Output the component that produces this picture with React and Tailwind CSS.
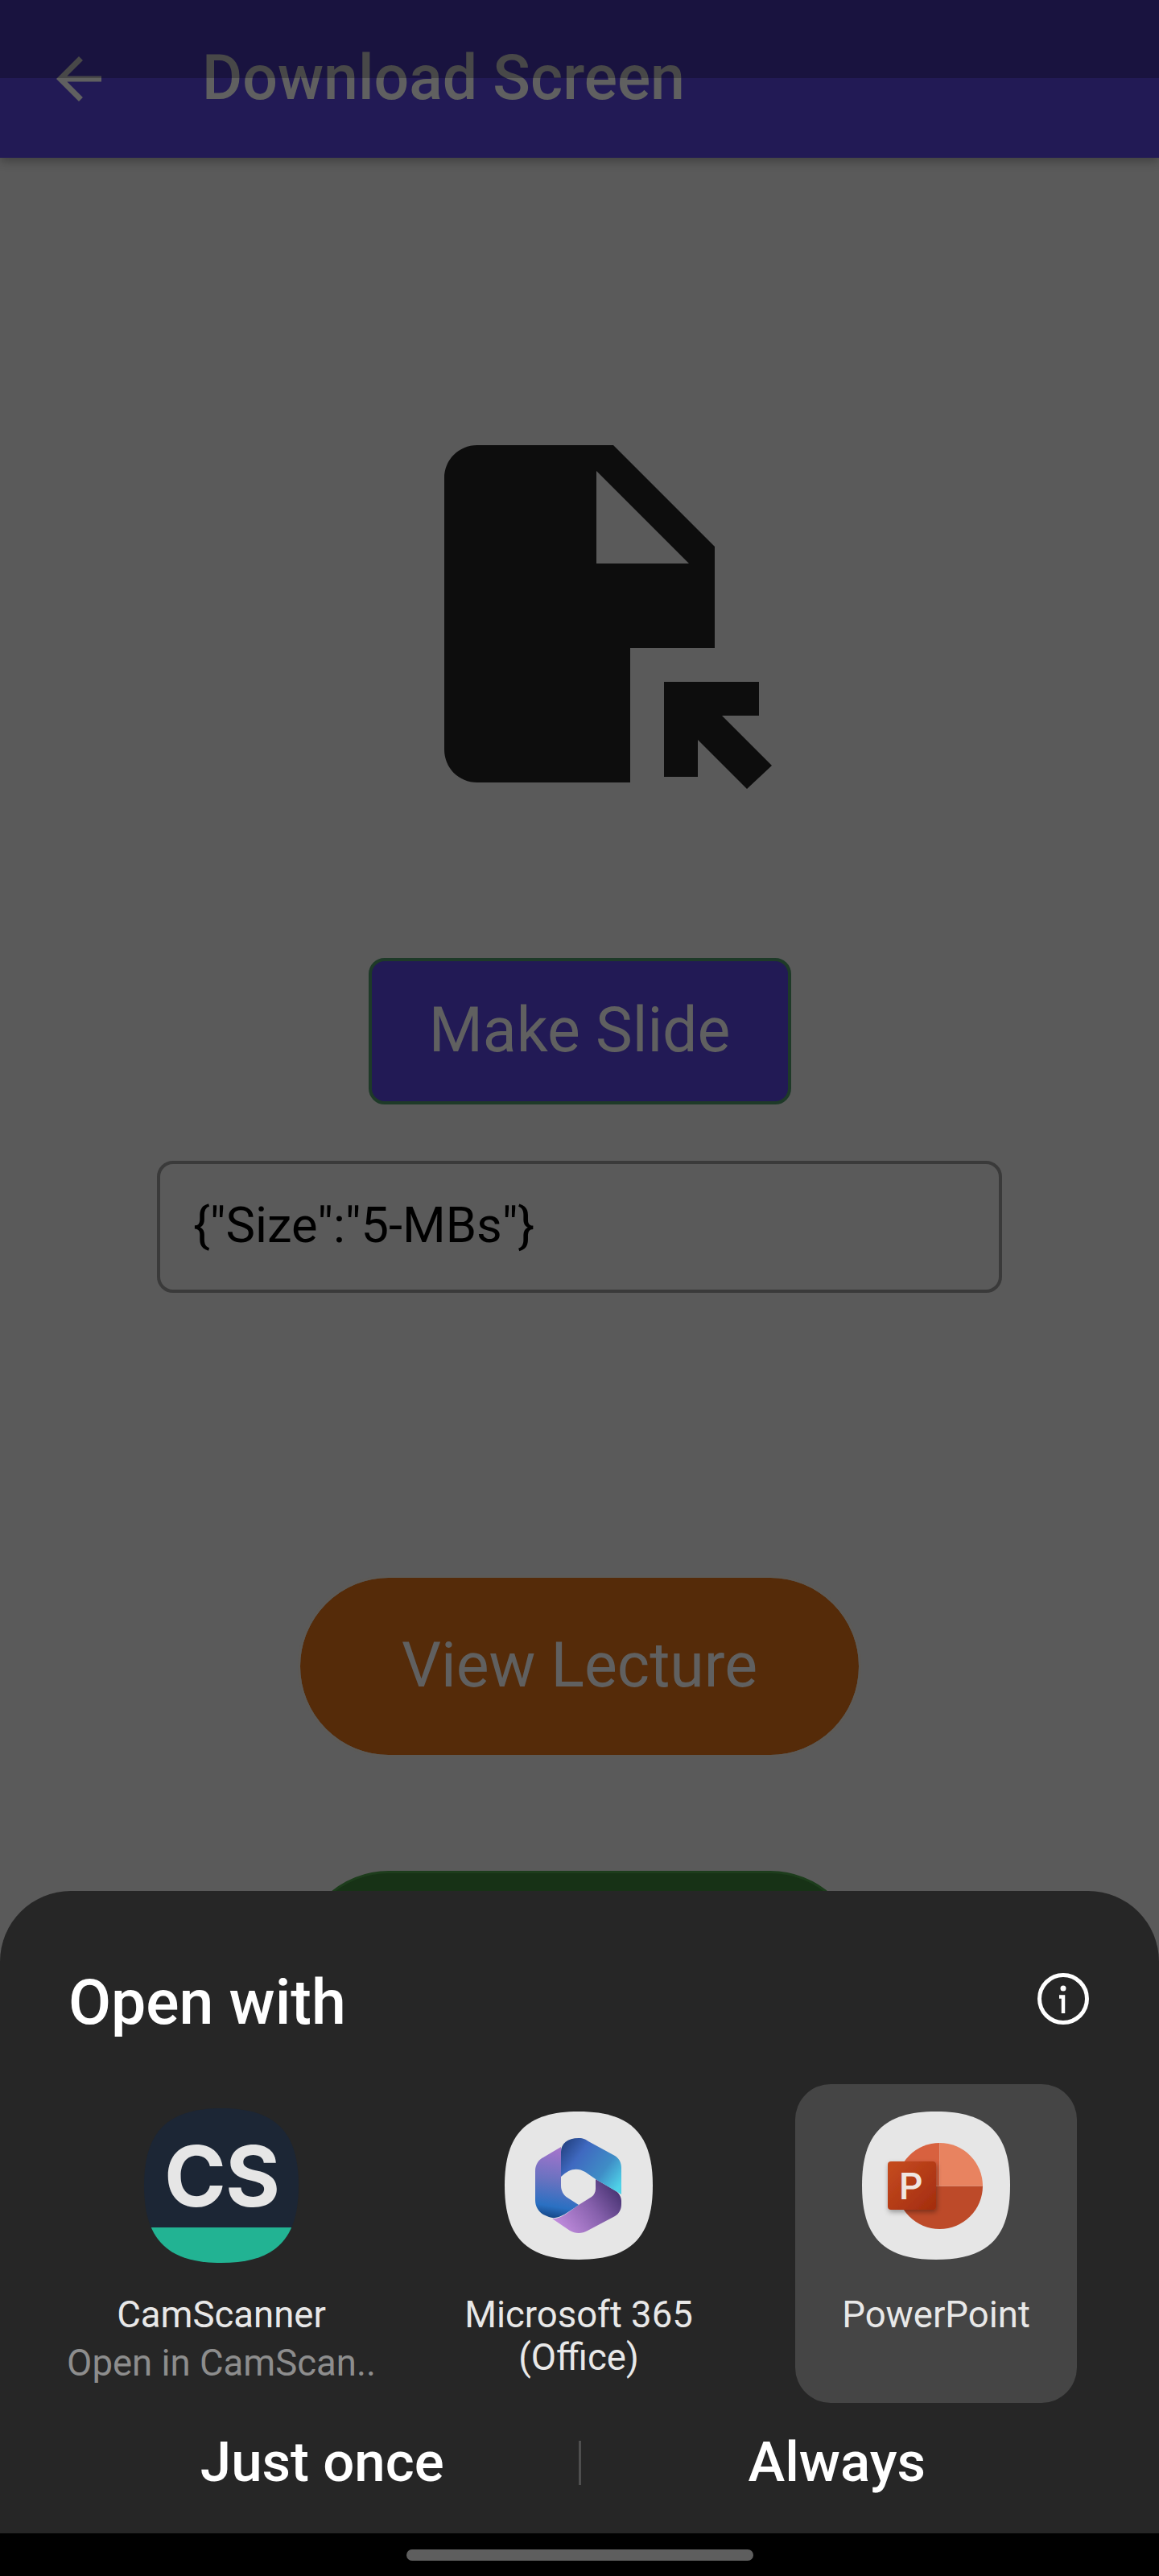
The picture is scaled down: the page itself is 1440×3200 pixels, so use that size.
import React from 'react';

const CS_SHAPE = 'M96 0C164 0 192 30 192 96C192 162 164 192 96 192C28 192 0 162 0 96C0 30 28 0 96 0Z';
const ICON_SHAPE = 'M92 0C157 0 184 28 184 92C184 156 157 184 92 184C27 184 0 156 0 92C0 28 27 0 92 0Z';

const CamScannerIcon = () => (
    <svg width="192" height="192" viewBox="0 0 192 192">
        <defs>
            <clipPath id="csClip">
                <path d={CS_SHAPE} />
            </clipPath>
        </defs>
        <g clipPath="url(#csClip)">
            <rect width="192" height="148" fill="#1c2635" />
            <rect y="148" width="192" height="44" fill="#22b393" />
        </g>
        <text x="25" y="122" fontFamily="Inter, sans-serif" fontWeight="700" fontSize="104" letterSpacing="-1" fill="#e6e6e6">CS</text>
    </svg>
);

const OfficeIcon = () => (
    <svg width="184" height="184" viewBox="0 0 184 184" className="m-1">
        <defs>
            <linearGradient id="msLeft" x1="0.6" y1="0" x2="0.5" y2="1">
                <stop offset="0" stopColor="#a874cc" />
                <stop offset="0.5" stopColor="#6672c0" />
                <stop offset="0.85" stopColor="#2a70c2" />
                <stop offset="1" stopColor="#174a8c" />
            </linearGradient>
            <linearGradient id="msTop" x1="0" y1="0.1" x2="1" y2="0.8">
                <stop offset="0" stopColor="#22407f" />
                <stop offset="0.3" stopColor="#3f69c0" />
                <stop offset="0.7" stopColor="#3f8dc6" />
                <stop offset="1" stopColor="#4fd2e8" />
            </linearGradient>
            <linearGradient id="msBottom" x1="0" y1="0.8" x2="1" y2="0.2">
                <stop offset="0" stopColor="#c48fe0" />
                <stop offset="0.55" stopColor="#8660ac" />
                <stop offset="1" stopColor="#43306e" />
            </linearGradient>
        </defs>
        <path d={ICON_SHAPE} fill="#e6e6e6" />
        <path d="M113 84L137 98C142 101 145 106 145 111V115C145 122 142 127 137 130L103 148C96 152 88 152 81 148L59 133C70 134 80 124 92 116L108 106C111 104 113 100 113 96V84Z" fill="url(#msBottom)" />
        <path d="M70 44L48 57C42 60 38 66 38 74V110C38 118 42 124 48 128L55 131C65 135 75 128 92 116L78 107C73 104 70 98 70 92V44Z" fill="url(#msLeft)" />
        <path d="M70 81V50C70 40 78 33 92 33C98 33 101 35 104 37L137 55C142 58 145 63 145 70V103L113 84L100 75C90 69 80 71 70 81Z" fill="url(#msTop)" />
    </svg>
);

const PowerPointIcon = () => (
    <svg width="184" height="184" viewBox="0 0 184 184" className="m-1">
        <defs>
            <linearGradient id="pptSquare" x1="0" y1="0" x2="1" y2="1">
                <stop offset="0" stopColor="#c64c20" />
                <stop offset="1" stopColor="#a32c0e" />
            </linearGradient>
            <filter id="pptShadow" x="-20%" y="-20%" width="150%" height="150%">
                <feDropShadow dx="1" dy="3" stdDeviation="3" floodColor="#000" floodOpacity="0.35" />
            </filter>
        </defs>
        <path d={ICON_SHAPE} fill="#e6e6e6" />
        <path d="M96.5 92.5H150A53.5 53.5 0 0 1 43 92.5Z" fill="#bd4a29" />
        <path d="M96.5 39A53.5 53.5 0 0 0 43 92.5H96.5Z" fill="#d8613f" />
        <path d="M96.5 39A53.5 53.5 0 0 1 150 92.5H96.5Z" fill="#e88360" />
        <rect x="32" y="62" width="60" height="60" rx="4" fill="url(#pptSquare)" filter="url(#pptShadow)" />
        <text x="46" y="109" fontFamily="Roboto, sans-serif" fontWeight="500" fontSize="46" fill="#f0e6e2">P</text>
    </svg>
);

const AppTile = ({ icon, name, sub, selected }) => (
    <div className={`w-[350px] h-[396px] rounded-[44px] flex flex-col items-center pt-[30px] ${selected ? 'bg-[#454545]' : ''}`}>
        <div className="w-[192px] h-[192px]">{icon}</div>
        <div className="mt-[38px] text-[45.5px] leading-[53px] text-[#e8e8e8] text-center whitespace-pre-line">{name}</div>
        {sub && <div className="mt-[2px] text-[45.5px] leading-[64px] text-[#8d8d8d] whitespace-nowrap">{sub}</div>}
    </div>
);

export default function App() {
    return (
        <div className="relative w-[1440px] h-[3200px] overflow-hidden bg-[#5a5a5a] font-['Roboto',sans-serif]">
            {/* App bar, status bar scrim sits over it */}
            <div className="relative h-[196px] bg-[#221a55] shadow-[0_4px_12px_rgba(0,0,0,0.3)] flex items-center pl-[56px]">
                <svg width="84" height="84" viewBox="0 0 24 24" fill="#606060" className="shrink-0">
                    <path d="M20 11H7.83l5.59-5.59L12 4l-8 8 8 8 1.41-1.41L7.83 13H20v-2z" />
                </svg>
                <div className="ml-[111px] -mt-[3px] text-[77px] leading-[90px] font-medium text-[#606060] whitespace-nowrap">Download Screen</div>
                <div className="absolute inset-x-0 top-0 h-[97px] bg-black/25" />
            </div>

            <div className="flex flex-col items-center pt-[315px]">
                <svg width="500" height="500" viewBox="470 511 500 500" fill="#0d0d0d">
                    <path fillRule="evenodd" d="M593 553H762L888 679V805H783V972H593C570 972 552 954 552 931V594C552 571 570 553 593 553ZM741 585V700H856Z" />
                    <path d="M825 847H943V889H897L959 951L928 980L867 919V965H825Z" />
                </svg>

                <div className="mt-[179px] w-[525px] h-[182px] rounded-[20px] border-4 border-[#1e3a28] bg-[#221a55] flex items-center justify-center text-[77px] text-[#606060]">
                    Make Slide
                </div>

                <div className="mt-[70px] w-[1050px] h-[164px] rounded-[20px] border-4 border-[#3a3a3a] flex items-center pl-[41px] pb-[4px] text-[61.5px] text-[#000000]">
                    {'{"Size":"5-MBs"}'}
                </div>

                <div className="mt-[351px] w-[700px] h-[226px] rounded-[113px] border-[3px] border-[#5c5a57] bg-[#552b09] bg-clip-padding flex items-center justify-center text-[77px] text-[#606060]">
                    View Lecture
                </div>

                <div className="mt-[141px] w-[700px] h-[226px] rounded-[113px] border-[3px] border-[#1d3d1c] bg-[#173216]" />
            </div>

            {/* Open with sheet */}
            <div className="absolute inset-x-0 bottom-0">
                <div className="h-[798px] bg-[#262626] rounded-t-[88px]">
                    <div className="flex items-center justify-between pl-[85px] pr-[87px] pt-[92px] h-[176px]">
                        <div className="mt-[9px] text-[77px] leading-[84px] font-medium text-white">Open with</div>
                        <svg width="64" height="64" viewBox="0 0 64 64" fill="none" stroke="#ffffff" strokeWidth="5" className="-mt-[1px]">
                            <circle cx="32" cy="32" r="29.5" />
                            <circle cx="32" cy="19" r="3.5" fill="#ffffff" stroke="none" />
                            <path d="M27 29.5H32V50" strokeWidth="4.5" />
                        </svg>
                    </div>

                    <div className="grid grid-cols-3 w-[1332px] ml-[53px] mt-[64px] justify-items-center">
                        <AppTile icon={<CamScannerIcon />} name="CamScanner" sub="Open in CamScan.." />
                        <AppTile icon={<OfficeIcon />} name={'Microsoft 365\n(Office)'} />
                        <AppTile icon={<PowerPointIcon />} name="PowerPoint" selected />
                    </div>

                    <div className="flex items-center px-[82px] mt-[34px] text-[69px] leading-[80px] font-medium text-white">
                        <div className="flex-1 text-center">Just once</div>
                        <div className="w-[3px] h-[55px] bg-[#4e4e4e] shrink-0" />
                        <div className="flex-1 text-center">Always</div>
                    </div>
                </div>
                <div className="h-[53px] bg-black flex justify-center pt-[20px]">
                    <div className="w-[431px] h-[14px] rounded-full bg-[#5e5e5e]" />
                </div>
            </div>
        </div>
    );
}
